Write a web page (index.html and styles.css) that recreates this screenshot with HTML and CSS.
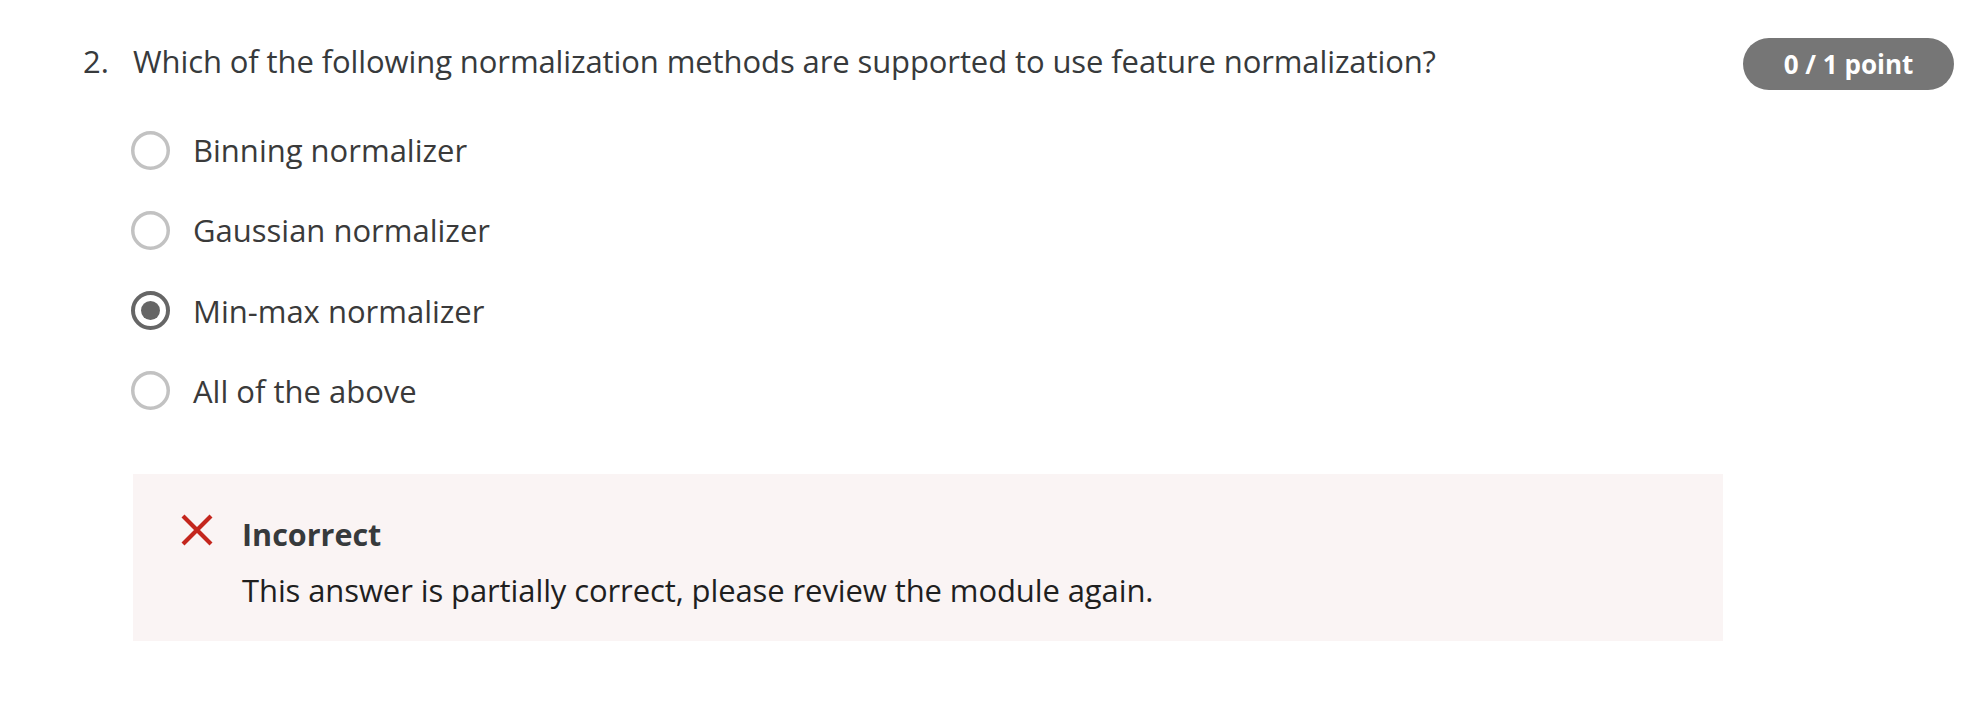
FILE: index.html
```html
<!DOCTYPE html>
<html lang="en">
<head>
<meta charset="utf-8">
<title>Quiz question</title>
<link rel="stylesheet" href="styles.css">
</head>
<body>
<div class="page">
  <div class="question-head">
    <div class="q-title">
      <span class="q-num">2.</span>
      <span class="q-text">Which of the following normalization methods are supported to use feature normalization?</span>
    </div>
    <div class="badge">0 / 1 point</div>
  </div>

  <div class="options">
    <div class="option">
      <svg class="radio" width="39" height="39" viewBox="0 0 39 39"><circle cx="19.5" cy="19.5" r="17.75" fill="none" stroke="#c2c2c2" stroke-width="3.5"/></svg>
      <span class="opt-label">Binning normalizer</span>
    </div>
    <div class="option">
      <svg class="radio" width="39" height="39" viewBox="0 0 39 39"><circle cx="19.5" cy="19.5" r="17.75" fill="none" stroke="#c2c2c2" stroke-width="3.5"/></svg>
      <span class="opt-label">Gaussian normalizer</span>
    </div>
    <div class="option">
      <svg class="radio" width="39" height="39" viewBox="0 0 39 39"><circle cx="19.5" cy="19.5" r="17.5" fill="none" stroke="#666666" stroke-width="4"/><circle cx="19.5" cy="19.5" r="9.5" fill="#666666"/></svg>
      <span class="opt-label">Min-max normalizer</span>
    </div>
    <div class="option">
      <svg class="radio" width="39" height="39" viewBox="0 0 39 39"><circle cx="19.5" cy="19.5" r="17.75" fill="none" stroke="#c2c2c2" stroke-width="3.5"/></svg>
      <span class="opt-label">All of the above</span>
    </div>
  </div>

  <div class="feedback">
    <svg class="fb-icon" width="32" height="32" viewBox="0 0 32 32"><path d="M2 2 L30 30 M30 2 L2 30" stroke="#c4261d" stroke-width="4.2" fill="none"/></svg>
    <div class="fb-body">
      <div class="fb-title">Incorrect</div>
      <div class="fb-text">This answer is partially correct, please review the module again.</div>
    </div>
  </div>
</div>
</body>
</html>
```

FILE: styles.css
```css
html, body {
  margin: 0;
  padding: 0;
  background: #ffffff;
}

body {
  font-family: "Open Sans", "Noto Sans", sans-serif;
  color: #373a3c;
}

.page {
  padding: 37px 28px 0 83px;
}

.question-head {
  display: flex;
  justify-content: space-between;
  align-items: flex-start;
  height: 48px;
}

.q-title {
  display: flex;
  font-size: 31px;
  line-height: 48px;
  letter-spacing: -0.1px;
  color: #373a3c;
}

.q-num {
  width: 50px;
  flex: none;
}

.badge {
  margin-top: 1px;
  width: 211px;
  height: 52px;
  border-radius: 26px;
  background: #767676;
  color: #ffffff;
  font-weight: 700;
  font-size: 26px;
  line-height: 52px;
  text-align: center;
  flex: none;
}

.options {
  margin-top: 45px;
  padding-left: 48px;
  display: flex;
  flex-direction: column;
  gap: 40.3px;
}

.option {
  display: flex;
  align-items: center;
  height: 40px;
  gap: 23px;
}

.radio {
  flex: none;
  display: block;
}

.opt-label {
  font-size: 31px;
  line-height: 40px;
  color: #3a3a3a;
}

.feedback {
  margin: 63px 231px 0 50px;
  background: #faf4f4;
  padding: 38px 48px 29px 48px;
  display: flex;
  align-items: flex-start;
  gap: 29px;
}

.fb-icon {
  flex: none;
  display: block;
  margin-top: 2px;
}

.fb-body {
  display: flex;
  flex-direction: column;
  gap: 12px;
}

.fb-title {
  font-size: 30.5px;
  line-height: 44px;
  font-weight: 700;
  color: #373a3c;
}

.fb-text {
  font-size: 31px;
  line-height: 44px;
  letter-spacing: -0.1px;
  color: #1f1f1f;
}
```
